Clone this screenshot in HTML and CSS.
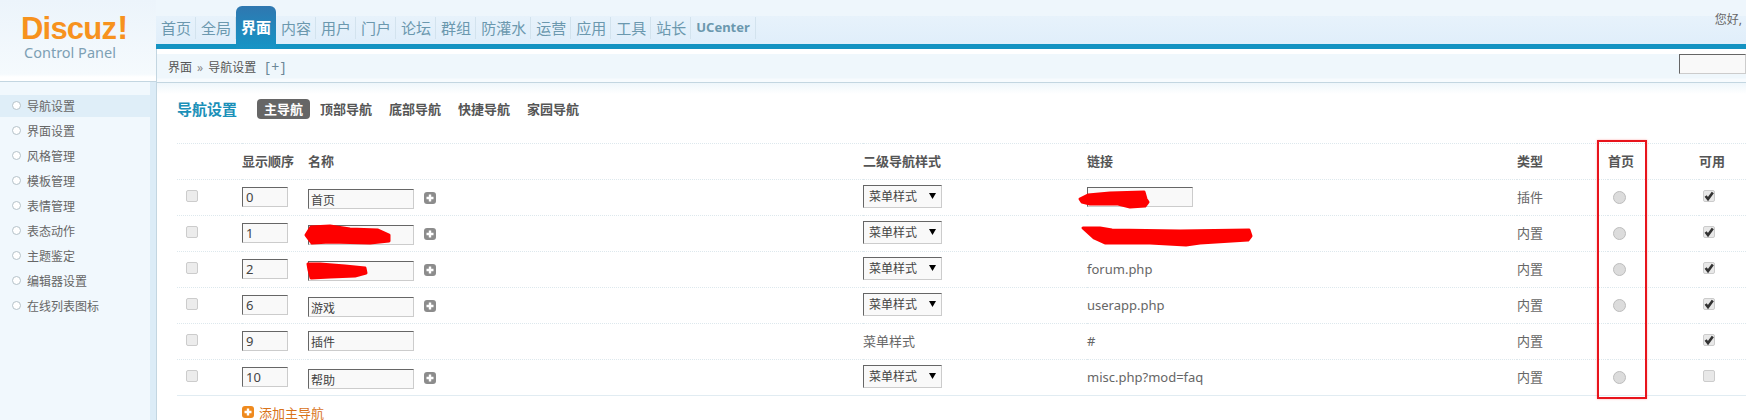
FILE: index.html
```html
<!DOCTYPE html>
<html lang="zh-CN">
<head>
<meta charset="utf-8">
<title>Discuz! Control Panel</title>
<link rel="stylesheet" href="styles.css">
</head>
<body>
<svg class="defs" width="0" height="0" aria-hidden="true">
  <symbol id="tick" viewBox="0 0 12 12"><path d="M2.6 6 5 9 9.8 2.4" fill="none" stroke="#333" stroke-width="2.6"/></symbol>
  <symbol id="plus" viewBox="0 0 12 12"><path d="M6 2.5v7M2.5 6h7" fill="none" stroke="#fff" stroke-width="2.4"/></symbol>
</svg>
<div class="page">
  <aside class="side">
    <div class="logo">
      <div class="logo-name">Discuz<span class="logo-bang">!</span></div>
      <div class="logo-sub">Control Panel</div>
    </div>
    <ul class="menu">
      <li class="menu-item active">导航设置</li>
      <li class="menu-item">界面设置</li>
      <li class="menu-item">风格管理</li>
      <li class="menu-item">模板管理</li>
      <li class="menu-item">表情管理</li>
      <li class="menu-item">表态动作</li>
      <li class="menu-item">主题鉴定</li>
      <li class="menu-item">编辑器设置</li>
      <li class="menu-item">在线列表图标</li>
    </ul>
  </aside>
  <main class="main">
    <header class="topbar">
      <nav class="nav">
        <a class="nav-item">首页</a>
        <a class="nav-item">全局</a>
        <a class="nav-item current">界面</a>
        <a class="nav-item">内容</a>
        <a class="nav-item">用户</a>
        <a class="nav-item">门户</a>
        <a class="nav-item">论坛</a>
        <a class="nav-item">群组</a>
        <a class="nav-item">防灌水</a>
        <a class="nav-item">运营</a>
        <a class="nav-item">应用</a>
        <a class="nav-item">工具</a>
        <a class="nav-item">站长</a>
        <a class="nav-item latin">UCenter</a>
      </nav>
      <div class="greet">您好,</div>
    </header>
    <div class="crumb">
      <div class="crumb-text">界面<span class="crumb-sep">»</span>导航设置<span class="crumb-more">[+]</span></div>
      <input class="field crumb-search" type="text" aria-label="搜索">
    </div>
    <div class="content">
      <div class="title-row">
        <h1 class="title">导航设置</h1>
        <a class="tab on">主导航</a>
        <a class="tab">顶部导航</a>
        <a class="tab">底部导航</a>
        <a class="tab">快捷导航</a>
        <a class="tab">家园导航</a>
      </div>
      <table class="grid">
        <colgroup>
          <col class="c1"><col class="c2"><col class="c3"><col class="c4"><col class="c5"><col class="c6"><col class="c7"><col class="c8">
        </colgroup>
        <thead>
          <tr><th></th><th>显示顺序</th><th>名称</th><th>二级导航样式</th><th>链接</th><th>类型</th><th>首页</th><th>可用</th></tr>
        </thead>
        <tbody>
          <tr>
            <td><span class="box row-box"></span></td>
            <td><input class="field order" value="0"></td>
            <td><div class="name-cell"><input class="field name" value="首页"><span class="plus"><svg width="12" height="12"><use href="#plus"/></svg></span></div></td>
            <td><select class="field style"><option>菜单样式</option></select></td>
            <td><input class="field link"></td>
            <td class="text">插件</td>
            <td><span class="radio"></span></td>
            <td><span class="box on-box"><svg width="12" height="12"><use href="#tick"/></svg></span></td>
          </tr>
          <tr>
            <td><span class="box row-box"></span></td>
            <td><input class="field order" value="1"></td>
            <td><div class="name-cell"><input class="field name"><span class="plus"><svg width="12" height="12"><use href="#plus"/></svg></span></div></td>
            <td><select class="field style"><option>菜单样式</option></select></td>
            <td class="text"></td>
            <td class="text">内置</td>
            <td><span class="radio"></span></td>
            <td><span class="box on-box"><svg width="12" height="12"><use href="#tick"/></svg></span></td>
          </tr>
          <tr>
            <td><span class="box row-box"></span></td>
            <td><input class="field order" value="2"></td>
            <td><div class="name-cell"><input class="field name"><span class="plus"><svg width="12" height="12"><use href="#plus"/></svg></span></div></td>
            <td><select class="field style"><option>菜单样式</option></select></td>
            <td class="text">forum.php</td>
            <td class="text">内置</td>
            <td><span class="radio"></span></td>
            <td><span class="box on-box"><svg width="12" height="12"><use href="#tick"/></svg></span></td>
          </tr>
          <tr>
            <td><span class="box row-box"></span></td>
            <td><input class="field order" value="6"></td>
            <td><div class="name-cell"><input class="field name" value="游戏"><span class="plus"><svg width="12" height="12"><use href="#plus"/></svg></span></div></td>
            <td><select class="field style"><option>菜单样式</option></select></td>
            <td class="text">userapp.php</td>
            <td class="text">内置</td>
            <td><span class="radio"></span></td>
            <td><span class="box on-box"><svg width="12" height="12"><use href="#tick"/></svg></span></td>
          </tr>
          <tr>
            <td><span class="box row-box"></span></td>
            <td><input class="field order" value="9"></td>
            <td><div class="name-cell flat"><input class="field name" value="插件"></div></td>
            <td class="text">菜单样式</td>
            <td class="text">#</td>
            <td class="text">内置</td>
            <td></td>
            <td><span class="box on-box"><svg width="12" height="12"><use href="#tick"/></svg></span></td>
          </tr>
          <tr>
            <td><span class="box row-box"></span></td>
            <td><input class="field order" value="10"></td>
            <td><div class="name-cell"><input class="field name" value="帮助"><span class="plus"><svg width="12" height="12"><use href="#plus"/></svg></span></div></td>
            <td><select class="field style"><option>菜单样式</option></select></td>
            <td class="text">misc.php?mod=faq</td>
            <td class="text">内置</td>
            <td><span class="radio"></span></td>
            <td><span class="box on-box off"></span></td>
          </tr>
        </tbody>
      </table>
      <a class="add"><span class="add-icon"><svg width="12" height="12"><use href="#plus"/></svg></span>添加主导航</a>
    </div>
  </main>
</div>
<svg class="scribbles" width="1746" height="420" aria-hidden="true">
  <path d="M1080 199 1088 195 1110 193 1144 192 1146 199 1148 202 1145 206 1130 207 1118 204 1090 204 1082 202Z"/>
  <path d="M1083 228 1100 228 1112 230 1180 231 1249 230 1251 236 1248 240 1200 243 1186 245 1150 243 1105 243 1094 238Z"/>
  <path d="M306 235 311 227 330 226 350 229 378 230 389 235 389 241 370 243 330 242 312 243Z"/>
  <path d="M308 264 320 264 345 266 365 268 366 273 355 276 330 277 311 278 309 270Z"/>
</svg>
<div class="highlight"></div>
</body>
</html>
```
FILE: styles.css
```css
* { box-sizing: border-box; }
html, body { margin: 0; padding: 0; height: 420px; overflow: hidden; background: #fff; }
body { font: 12px "Noto Sans", "Noto Sans CJK SC", sans-serif; color: #666; }
.defs { position: absolute; }
.page { display: grid; grid-template-columns: 156px 1590px; width: 1746px; height: 420px; }

.side { display: flex; flex-direction: column; height: 420px; }
.logo { height: 82px; padding: 11px 0 0 21px; background: linear-gradient(#ecf4fb 0, #f5fafd 74px, #fff 77px); border-bottom: 1px solid #c3d6e1; overflow: hidden; }
.logo-name { height: 33px; font: bold 31px/33px "Liberation Sans", sans-serif; color: #f7921e; letter-spacing: -.8px; }
.logo-bang { margin-left: 1px; font-size: 33px; line-height: 33px; }
.logo-sub { font: 14.5px/17px "Noto Sans", sans-serif; color: #7da0b4; margin-left: 3px; }
.menu { list-style: none; margin: 0; padding: 13px 0 0; flex: 1; background: #f1f8fd; border-right: 6px solid #dcecf7; }
.menu-item { position: relative; height: 22px; line-height: 24px; margin-bottom: 3px; padding-left: 27px; font-size: 12px; color: #666; white-space: nowrap; }
.menu-item::before { content: ""; position: absolute; left: 12px; top: 6px; width: 7px; height: 7px; border: 1px solid #b5c2c9; border-radius: 50%; background: #fff; }
.menu-item.active { background: #dfeef8; }

.main { border-left: 1px solid #c3d6e1; height: 420px; min-width: 0; }
.topbar { display: flex; height: 49px; margin-left: -1px; background: linear-gradient(#eef6fc 0, #eef6fc 16px, #e7f2fb 16px, #e0eefa 44px); border-bottom: 5px solid #1493c2; }
.nav { display: flex; align-items: flex-start; padding-top: 17px; }
.nav-item { height: 22px; padding: 0 4px 0 5px; border-right: 1px solid #d3e3ee; font-size: 15px; line-height: 22px; color: #6b98ae; white-space: nowrap; }
.nav-item.latin { font: bold 13px/21px "Noto Sans", sans-serif; padding: 0 5px 0 5px; }
.nav-item.current { height: 43px; margin-top: -11px; padding: 9px 5px 0; border: 0; border-radius: 6px 6px 0 0; background: linear-gradient(#2f77b0, #1695c6); color: #fff; font-weight: bold; line-height: 24px; }
.greet { margin-left: auto; margin-right: 4px; padding-top: 11px; font-size: 12px; line-height: 18px; white-space: nowrap; color: #666; }

.crumb { display: flex; align-items: flex-start; justify-content: space-between; height: 28px; margin-top: 5px; padding-left: 11px; background: linear-gradient(#eff7fc 0, #eff7fc 24px, #f7fbfe 25px); }
.crumb-text { font-size: 12px; line-height: 26px; color: #555; white-space: nowrap; }
.crumb-sep { margin: 0 5px; color: #888; }
.crumb-more { margin-left: 9px; font-size: 14px; letter-spacing: 1.5px; color: #6b8797; }
.crumb-search { width: 67px; height: 20px; }

.content { position: relative; padding: 17px 0 0 20px; }
.content::before { content: ""; position: absolute; left: 0; right: 0; top: 0; height: 11px; border-top: 1px solid #c3d6e1; background: linear-gradient(#eef6fb, #fff); }
.title-row { position: relative; display: flex; align-items: center; height: 20px; }
.title { margin: 0 20px 0 0; font-size: 15px; line-height: 20px; font-weight: bold; color: #1a90b8; }
.tab { height: 20px; margin-right: 3px; padding: 0 7px; border-radius: 4px; font-size: 13px; line-height: 20px; font-weight: bold; color: #555; white-space: nowrap; }
.tab.on { background: #666; color: #fff; }

.grid { width: 1569px; margin-top: 24px; border-collapse: collapse; table-layout: fixed; }
.c1 { width: 65px; } .c2 { width: 66px; } .c3 { width: 555px; } .c4 { width: 224px; }
.c5 { width: 430px; } .c6 { width: 91px; } .c7 { width: 91px; } .c8 { width: 47px; }
.grid tr { height: 36px; border-top: 1px dotted #dde8ed; }
.grid tbody tr:last-child { border-bottom: 1px solid #e1ecf2; }
.grid th, .grid td { padding: 0 0 2px; text-align: left; vertical-align: middle; }
.grid th { font-size: 13px; font-weight: bold; color: #555; }
.grid td.text { font-size: 13px; color: #666; white-space: nowrap; }

.field { display: block; border: 1px solid; border-color: #666 #ccc #ccc #666; border-radius: 0; outline: 0; background: #f9f9f9; color: #444; font: 13px "Noto Sans", "Noto Sans CJK SC", sans-serif; }
.order { width: 46px; height: 20px; padding: 0 3px; }
.name { width: 106px; height: 20px; padding: 2px 2px 0; font-size: 12px; }
.name-cell { display: flex; align-items: center; margin-top: 4px; }
.name-cell.flat { margin-top: 0; }
.plus { display: block; width: 12px; height: 12px; margin: -2px 0 0 10px; border-radius: 3px; background: #8c8c8c; }
.plus svg, .add-icon svg, .on-box svg { display: block; }
.style { width: 79px; height: 23px; padding: 0 0 0 5px; font-size: 12px; appearance: none; -webkit-appearance: none; background: #f9f9f9 url("data:image/svg+xml,%3Csvg xmlns='http://www.w3.org/2000/svg' width='7' height='6'%3E%3Cpath d='M0 0h7L3.5 6z'/%3E%3C/svg%3E") no-repeat 65px 7px; }
.link { width: 106px; height: 20px; }

.box { display: block; width: 12px; height: 12px; border: 1px solid #ccc; border-radius: 2px; background: #ececec; }
.row-box { margin: -1px 0 0 9px; }
.on-box { margin: -1px 0 0 4px; background: #e8e8e8; }
.on-box svg { margin: -1px; }
.radio { display: block; width: 13px; height: 13px; margin: 2px 0 0 5px; border: 1px solid #bdbdbd; border-radius: 50%; background: #dcdcdc; }

.add { display: flex; align-items: center; height: 16px; margin: 8px 0 0 65px; font-size: 13px; color: #d9731a; white-space: nowrap; }
.add-icon { display: block; width: 12px; height: 12px; margin-right: 5px; border-radius: 3px; background: #ef8a1e; }

.scribbles { position: absolute; left: 0; top: 0; pointer-events: none; }
.scribbles path { fill: #fe0000; stroke: #fe0000; stroke-width: 3; stroke-linejoin: round; }
.highlight { position: absolute; left: 1597px; top: 140px; width: 50px; height: 259px; border: 2px solid #e8141c; box-shadow: 0 0 2px rgba(255, 90, 90, .5); pointer-events: none; }
```
